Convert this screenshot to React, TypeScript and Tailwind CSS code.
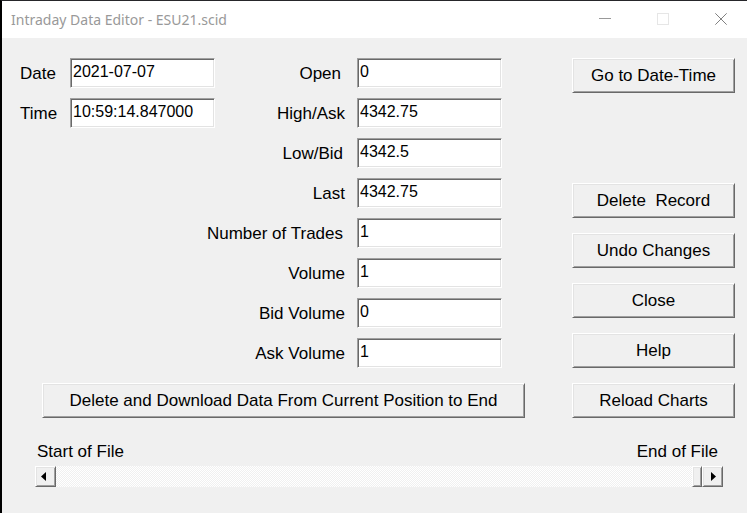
import type { ReactNode } from "react";

const prices = [
  { id: "open", label: "Open", value: "0", pad: "pr-4" },
  { id: "high", label: "High/Ask", value: "4342.75", pad: "pr-3" },
  { id: "low", label: "Low/Bid", value: "4342.5", pad: "pr-3.5" },
  { id: "last", label: "Last", value: "4342.75", pad: "pr-3" },
  { id: "trades", label: "Number of Trades", value: "1", pad: "pr-3.5" },
  { id: "volume", label: "Volume", value: "1", pad: "pr-3" },
  { id: "bid-volume", label: "Bid Volume", value: "0", pad: "pr-3" },
  { id: "ask-volume", label: "Ask Volume", value: "1", pad: "pr-3" },
];

const raised =
  "border border-t-white border-l-white border-r-[#696969] border-b-[#696969] bg-[#f0f0f0] shadow-[inset_1px_1px_0_#e3e3e3,inset_-1px_-1px_0_#a0a0a0]";

function Button({ children }: { children: ReactNode }) {
  return (
    <button type="button" className={`h-[35px] w-full whitespace-pre ${raised}`}>
      {children}
    </button>
  );
}

function Field({ id, value }: { id: string; value: string }) {
  return (
    <input
      id={id}
      type="text"
      defaultValue={value}
      className="h-[30px] w-full min-w-0 border border-t-[#a0a0a0] border-l-[#a0a0a0] border-r-white border-b-white bg-white pb-[3px] pl-0.5 text-base shadow-[inset_1px_1px_0_#696969,inset_-1px_-1px_0_#e3e3e3] outline-none"
    />
  );
}

function TitleBar() {
  return (
    <header className="flex h-[37px] items-center justify-between bg-white pl-[9px] text-[#999999]">
      <h1 className="font-['Noto_Sans','Open_Sans',sans-serif] text-sm">
        Intraday Data Editor - ESU21.scid
      </h1>
      <div className="flex gap-[46px] pr-5">
        <button type="button" aria-label="Minimize">
          <svg width="12" height="13" className="block" shapeRendering="crispEdges">
            <path d="M0 5.5h12" stroke="#999999" />
          </svg>
        </button>
        <button type="button" aria-label="Maximize" disabled>
          <svg width="12" height="13" className="block" shapeRendering="crispEdges">
            <path d="M.5 .5h11v11h-11z" fill="none" stroke="#e6e6e6" />
          </svg>
        </button>
        <button type="button" aria-label="Close window">
          <svg width="12" height="13" className="block">
            <path d="M.3 .3l11.4 11.4M11.7 .3l-11.4 11.4" stroke="#808080" />
          </svg>
        </button>
      </div>
    </header>
  );
}

function FilePosition() {
  return (
    <div className="mt-6 pr-3 pl-[15px]">
      <div className="flex justify-between pr-[5px] pl-0.5 leading-5">
        <label htmlFor="position">Start of File</label>
        <span>End of File</span>
      </div>
      <div className="mt-1 flex h-[21px]">
        <button
          type="button"
          aria-label="Previous record"
          className={`flex w-[21px] shrink-0 items-center justify-center ${raised}`}
        >
          <svg width="7" height="9" className="mr-1">
            <path d="M6 0v9L1 4.5z" />
          </svg>
        </button>
        <input
          id="position"
          type="range"
          defaultValue={100}
          className="h-full min-w-0 flex-1 appearance-none bg-[repeating-conic-gradient(#f0f0f0_0_25%,#ffffff_0_50%)] bg-size-[2px_2px] outline-none [&::-webkit-slider-thumb]:h-[21px] [&::-webkit-slider-thumb]:w-[10px] [&::-webkit-slider-thumb]:appearance-none [&::-webkit-slider-thumb]:border [&::-webkit-slider-thumb]:border-t-white [&::-webkit-slider-thumb]:border-r-[#696969] [&::-webkit-slider-thumb]:border-b-[#696969] [&::-webkit-slider-thumb]:border-l-white [&::-webkit-slider-thumb]:bg-[#f0f0f0] [&::-webkit-slider-thumb]:shadow-[inset_1px_1px_0_#e3e3e3,inset_-1px_-1px_0_#a0a0a0]"
        />
        <button
          type="button"
          aria-label="Next record"
          className={`flex w-[21px] shrink-0 items-center justify-center ${raised}`}
        >
          <svg width="7" height="9" className="ml-0.5">
            <path d="M1 0v9l5-4.5z" />
          </svg>
        </button>
      </div>
    </div>
  );
}

export default function App() {
  return (
    <div className="min-h-screen border-t border-l-2 border-t-[#26262a] border-l-black bg-[#f0f0f0] font-['Liberation_Sans',Arial,sans-serif] text-[17px] leading-5 text-black">
      <TitleBar />
      <main className="py-5 pr-3 pl-[18px]">
        <div className="flex gap-[47px]">
          <div className="flex-1">
            <div className="mr-[23px] grid grid-cols-[50px_1fr_142px_1fr]">
              <div className="col-span-2 grid grid-cols-[50px_1fr] content-start items-center gap-y-2.5">
                <label htmlFor="date" className="pt-0.5">
                  Date
                </label>
                <Field id="date" value="2021-07-07" />
                <label htmlFor="time" className="pt-0.5">
                  Time
                </label>
                <Field id="time" value="10:59:14.847000" />
              </div>
              <div className="col-span-2 grid grid-cols-[142px_1fr] items-center gap-y-2.5">
                {prices.map(({ id, label, value, pad }) => (
                  <div key={id} className="contents">
                    <label htmlFor={id} className={`flex justify-end pt-0.5 whitespace-nowrap ${pad}`}>
                      {label}
                    </label>
                    <Field id={id} value={value} />
                  </div>
                ))}
              </div>
            </div>
            <div className="mt-[15px] pl-[22px]">
              <Button>Delete and Download Data From Current Position to End</Button>
            </div>
          </div>

          <div className="flex w-[163px] shrink-0 flex-col justify-between">
            <Button>Go to Date-Time</Button>
            <div className="flex flex-col gap-[15px]">
              <Button>{"Delete  Record"}</Button>
              <Button>Undo Changes</Button>
              <Button>Close</Button>
              <Button>Help</Button>
              <Button>Reload Charts</Button>
            </div>
          </div>
        </div>
        <FilePosition />
      </main>
    </div>
  );
}
